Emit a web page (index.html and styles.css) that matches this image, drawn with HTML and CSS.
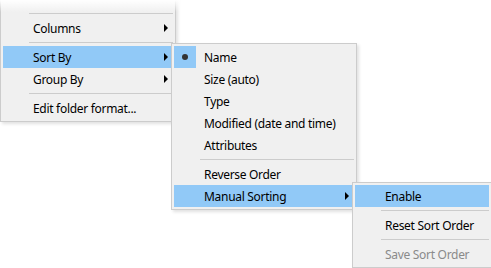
FILE: index.html
```html
<!DOCTYPE html>
<html>
<head>
<meta charset="utf-8">
<link rel="stylesheet" href="styles.css">
</head>
<body>
<div class="menu menu-view">
  <div class="item disabled"><span class="check"></span><span class="label"></span></div>
  <div class="sep"></div>
  <div class="item"><span class="check"></span><span class="label">Columns</span><span class="arrow"></span></div>
  <div class="sep"></div>
  <div class="item hot"><span class="check"></span><span class="label">Sort By</span><span class="arrow"></span></div>
  <div class="item"><span class="check"></span><span class="label">Group By</span><span class="arrow"></span></div>
  <div class="sep"></div>
  <div class="item"><span class="check"></span><span class="label">Edit folder format...</span></div>
</div>
<div class="fade"></div>
<div class="menu menu-sort">
  <div class="item"><span class="check checked"><span class="bullet"></span></span><span class="label">Name</span></div>
  <div class="item"><span class="check"></span><span class="label">Size (auto)</span></div>
  <div class="item"><span class="check"></span><span class="label">Type</span></div>
  <div class="item"><span class="check"></span><span class="label">Modified (date and time)</span></div>
  <div class="item"><span class="check"></span><span class="label">Attributes</span></div>
  <div class="sep"></div>
  <div class="item"><span class="check"></span><span class="label">Reverse Order</span></div>
  <div class="item hot"><span class="check"></span><span class="label">Manual Sorting</span><span class="arrow"></span></div>
</div>
<div class="menu menu-manual">
  <div class="item hot"><span class="check"></span><span class="label">Enable</span></div>
  <div class="sep"></div>
  <div class="item"><span class="check"></span><span class="label">Reset Sort Order</span></div>
  <div class="sep"></div>
  <div class="item disabled"><span class="check"></span><span class="label">Save Sort Order</span></div>
</div>
</body>
</html>
```
FILE: styles.css
```css
html, body {
  margin: 0;
  padding: 0;
  background: #ffffff;
  width: 491px;
  height: 268px;
  overflow: hidden;
  font-family: "Noto Sans", "Segoe UI", sans-serif;
  font-size: 12px;
  letter-spacing: -0.3px;
  color: #000;
}

.menu {
  position: absolute;
  box-sizing: border-box;
  background: #f0f0f0;
  border: 1px solid #cccccc;
  padding: 2px;
  box-shadow: 2px 2px 3px rgba(0, 0, 0, 0.12);
  display: flex;
  flex-direction: column;
}

.menu-view {
  left: 0;
  top: -15px;
  width: 176px;
}

.menu-sort {
  left: 171px;
  top: 43px;
  width: 186px;
}

.menu-manual {
  left: 352px;
  top: 182px;
  width: 140px;
}

.fade {
  position: absolute;
  left: 0;
  top: 0;
  width: 180px;
  height: 12px;
  background: linear-gradient(to bottom, #ffffff 0%, rgba(255, 255, 255, 0) 100%);
}

.item {
  height: 22px;
  display: flex;
  align-items: center;
  white-space: nowrap;
}

.item.hot {
  background: #91c9f7;
}

.item.disabled {
  color: #8a8a8a;
}

.check {
  width: 22px;
  height: 22px;
  flex: none;
  display: flex;
  align-items: center;
  justify-content: center;
}

.check.checked {
  background: #91c9f7;
}

.bullet {
  width: 6px;
  height: 6px;
  border-radius: 50%;
  background: #333333;
}

.label {
  margin-left: 8px;
  flex: 1;
}

.arrow {
  flex: none;
  width: 0;
  height: 0;
  border-top: 4px solid transparent;
  border-bottom: 4px solid transparent;
  border-left: 4px solid #000;
  margin-right: 5px;
}

.sep {
  height: 1px;
  background: #cccccc;
  margin: 3px 0 3px 26px;
  flex: none;
}
```
